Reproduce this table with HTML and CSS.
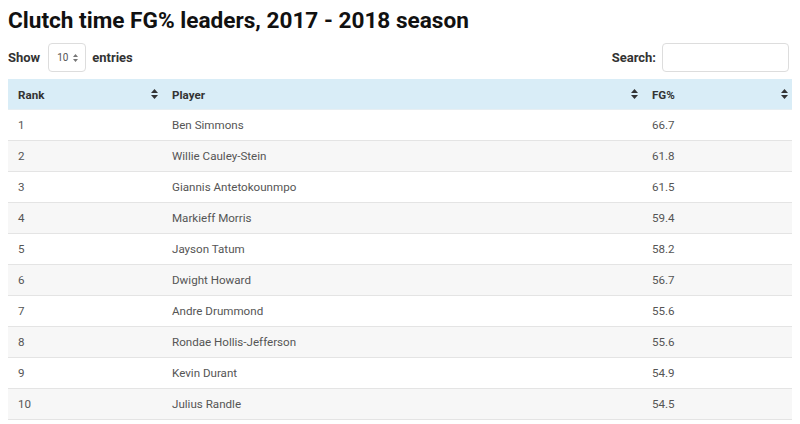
FILE: index.html
```html
<!DOCTYPE html>
<html>
<head>
<meta charset="utf-8">
<link rel="stylesheet" href="styles.css">
</head>
<body>
<h1 class="title">Clutch time FG% leaders, 2017 - 2018 season</h1>
<div class="controls">
  <label class="length">Show <span class="select">10 <svg class="caret" width="5" height="8" viewBox="0 0 5 8"><path d="M2.5 0 L5 3 H0 Z M2.5 8 L5 5 H0 Z" fill="#777"/></svg></span> entries</label>
  <label class="search">Search: <span class="input"></span></label>
</div>
<table class="grid">
  <colgroup><col class="c1"><col class="c2"><col class="c3"></colgroup>
  <thead>
    <tr>
      <th><span>Rank</span><svg class="sort" width="7" height="10" viewBox="0 0 7 10"><path d="M3.5 0 L7 4 H0 Z M3.5 10 L7 6 H0 Z" fill="#333"/></svg></th>
      <th><span>Player</span><svg class="sort" width="7" height="10" viewBox="0 0 7 10"><path d="M3.5 0 L7 4 H0 Z M3.5 10 L7 6 H0 Z" fill="#333"/></svg></th>
      <th><span>FG%</span><svg class="sort" width="7" height="10" viewBox="0 0 7 10"><path d="M3.5 0 L7 4 H0 Z M3.5 10 L7 6 H0 Z" fill="#333"/></svg></th>
    </tr>
  </thead>
  <tbody>
    <tr><td>1</td><td>Ben Simmons</td><td>66.7</td></tr>
    <tr><td>2</td><td>Willie Cauley-Stein</td><td>61.8</td></tr>
    <tr><td>3</td><td>Giannis Antetokounmpo</td><td>61.5</td></tr>
    <tr><td>4</td><td>Markieff Morris</td><td>59.4</td></tr>
    <tr><td>5</td><td>Jayson Tatum</td><td>58.2</td></tr>
    <tr><td>6</td><td>Dwight Howard</td><td>56.7</td></tr>
    <tr><td>7</td><td>Andre Drummond</td><td>55.6</td></tr>
    <tr><td>8</td><td>Rondae Hollis-Jefferson</td><td>55.6</td></tr>
    <tr><td>9</td><td>Kevin Durant</td><td>54.9</td></tr>
    <tr><td>10</td><td>Julius Randle</td><td>54.5</td></tr>
  </tbody>
</table>
</body>
</html>
```

FILE: styles.css
```css
html, body { background: #fff; }
body {
  margin: 8px;
  font-family: Roboto, "Liberation Sans", sans-serif;
  color: #555;
}
.title {
  margin: 0;
  font-size: 22.6px;
  line-height: 26px;
  font-weight: 700;
  color: #111;
}
.controls {
  display: flex;
  justify-content: space-between;
  align-items: center;
  margin-top: 9px;
  height: 29px;
  font-size: 13px;
  font-weight: 700;
  color: #333;
}
.length, .search {
  display: flex;
  align-items: center;
  gap: 6px;
}
.select {
  box-sizing: border-box;
  width: 38px;
  height: 29px;
  margin-left: 2px;
  border: 1px solid #ddd;
  border-radius: 4px;
  display: flex;
  align-items: center;
  justify-content: space-between;
  padding: 0 7px 0 8px;
  font-weight: 400;
  font-size: 10px;
  color: #555;
}
.input {
  box-sizing: border-box;
  width: 127px;
  height: 29px;
  border: 1px solid #ddd;
  border-radius: 4px;
  margin-right: 3px;
}
.grid {
  margin-top: 7px;
  width: 784px;
  border-collapse: collapse;
  table-layout: fixed;
  font-size: 11.6px;
}
.c1 { width: 154px; }
.c2 { width: 480px; }
.c3 { width: 150px; }
.grid th {
  background: #d9edf7;
  height: 30px;
  padding: 0 4px 0 10px;
  text-align: left;
  font-weight: 700;
  color: #333;
  border-bottom: 1px solid #e6eef2;
}
.grid th { position: relative; }
.grid th span { vertical-align: middle; }
.grid th .sort {
  position: absolute;
  right: 4px;
  top: 10px;
}
.grid td {
  height: 30px;
  padding: 0 10px;
  border-bottom: 1px solid #e4e4e4;
  color: #555;
}
.grid tbody tr:nth-child(even) td { background: #f7f7f7; }
.grid tbody td:last-child { border-right: 1px solid #e4e4e4; }
```
